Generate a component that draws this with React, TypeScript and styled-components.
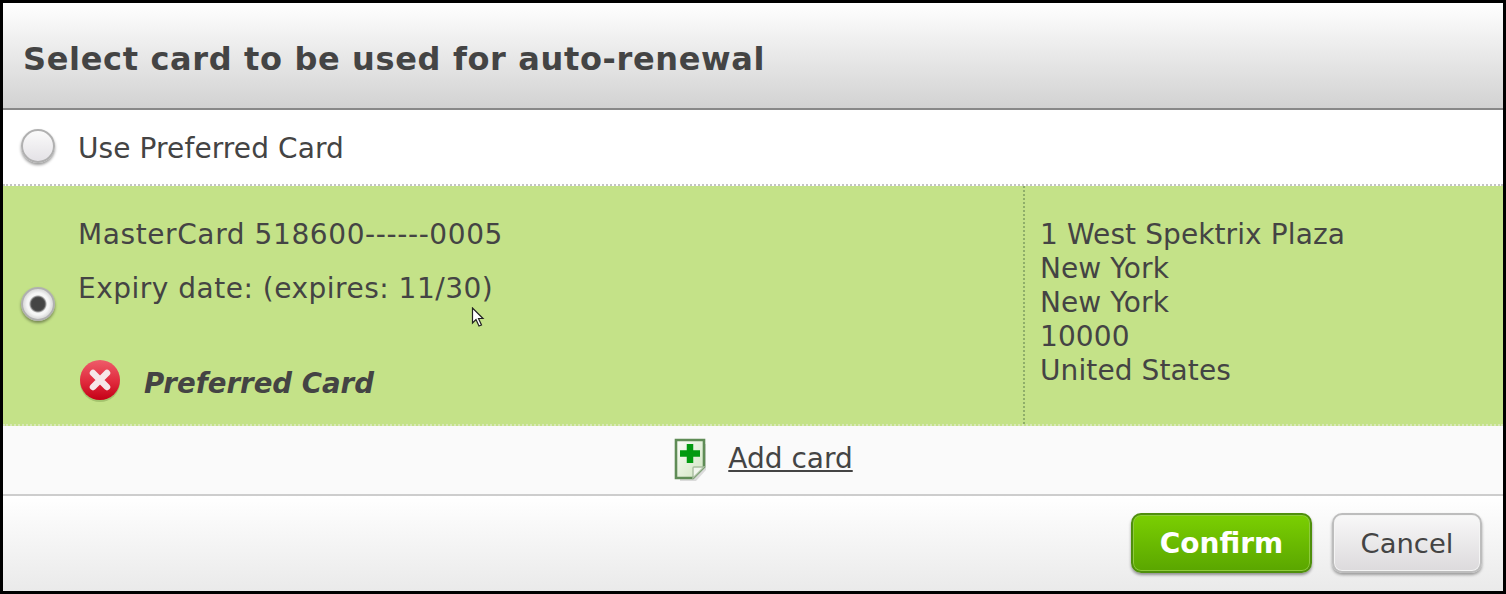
import styled, { createGlobalStyle } from "styled-components";

const GlobalStyle = createGlobalStyle`
  html, body {
    margin: 0;
    padding: 0;
    background: #000;
  }
  body {
    font-family: "DejaVu Sans", Verdana, sans-serif;
    color: #444;
  }
`;

const Dialog = styled.div`
  position: relative;
  box-sizing: border-box;
  width: 1506px;
  height: 594px;
  border: 3px solid #000;
  background: #fff;
  display: flex;
  flex-direction: column;
`;

const Header = styled.div`
  box-sizing: border-box;
  height: 107px;
  display: flex;
  align-items: center;
  padding: 6px 0 0 20px;
  background: linear-gradient(#fff, #d2d2d2);
  border-bottom: 2px solid #888;
`;

const Title = styled.h1`
  margin: 0;
  font-size: 32px;
  font-weight: 700;
  letter-spacing: 0.65px;
  color: #444;
`;

const PreferredRow = styled.label`
  box-sizing: border-box;
  height: 76px;
  display: flex;
  align-items: center;
  padding-top: 4px;
  border-bottom: 2px dotted #c4c4c4;
`;

const RadioCell = styled.div<{ $lift: number }>`
  width: 75px;
  flex: none;
  display: flex;
  justify-content: center;
  padding: 0 5px ${(p) => p.$lift}px 0;
  box-sizing: border-box;
`;

const Radio = styled.span<{ $checked?: boolean }>`
  display: block;
  width: 34px;
  height: 34px;
  border-radius: 50%;
  box-sizing: border-box;
  border: 2px solid #b0b0b0;
  background: ${(p) =>
    p.$checked
      ? "radial-gradient(circle, #444 0 6px, #555 7px, #f6f6f6 9px 11px, #d8d8d8 15px)"
      : "linear-gradient(#fafafa, #e4e2e6)"};
  box-shadow: 0 2px 3px rgba(0, 0, 0, 0.4);
`;

const BodyText = styled.span<{ $tracking?: number }>`
  font-size: 28px;
  line-height: 34px;
  letter-spacing: ${(p) => p.$tracking ?? 0.1}px;
  color: #444;
`;

const CardRow = styled.div`
  box-sizing: border-box;
  height: 240px;
  display: flex;
  background: #c4e288;
  border-bottom: 2px dotted #d8e8b8;
`;

const CardMain = styled.div`
  box-sizing: border-box;
  width: 1022px;
  flex: none;
  display: flex;
  align-items: center;
  border-right: 2px dotted #8fae6a;
`;

const CardDetails = styled.div`
  display: flex;
  flex-direction: column;
  padding-top: 32px;
  align-self: flex-start;
`;

const ExpiryLine = styled(BodyText)`
  margin-top: 20px;
`;

const PreferredBadge = styled.div`
  display: flex;
  align-items: center;
  gap: 22px;
  margin-top: 52px;
`;

const PreferredLabel = styled.span`
  padding-top: 6px;
  font-size: 27.6px;
  font-weight: 700;
  font-style: italic;
  color: #444;
`;

const Address = styled.div`
  display: flex;
  flex-direction: column;
  padding: 32px 0 0 15px;
`;

const AddRow = styled.div`
  box-sizing: border-box;
  height: 70px;
  display: flex;
  align-items: center;
  justify-content: center;
  gap: 21px;
  background: #fafafa;
  border-bottom: 2px solid #cdcdcd;
  padding: 0 0 3px 20px;
`;

const AddIcon = styled.svg`
  margin-top: 3px;
`;

const AddLink = styled.a`
  font-size: 28px;
  color: #444;
  text-decoration: underline;
`;

const Footer = styled.div`
  flex: 1;
  display: flex;
  align-items: center;
  justify-content: flex-end;
  gap: 20px;
  padding: 0 21px 2px 0;
  background: linear-gradient(#fff, #eaeaea);
`;

const Button = styled.button`
  box-sizing: border-box;
  height: 60px;
  padding: 2px 0 0;
  border-radius: 10px;
  font-family: inherit;
  cursor: pointer;
`;

const ConfirmButton = styled(Button)`
  width: 181px;
  font-size: 28px;
  font-weight: 700;
  color: #fff;
  border: 2px solid #4f8f0c;
  background: linear-gradient(#7bcf02, #5aa600);
  box-shadow: inset 0 0 0 1px #8ecb3c, 0 2px 3px rgba(0, 0, 0, 0.4);
`;

const CancelButton = styled(Button)`
  width: 150px;
  font-size: 27.4px;
  color: #444;
  border: 2px solid #bdbdbd;
  background: linear-gradient(#f8f8f8, #dcdadc);
  box-shadow: inset 0 0 0 1px #f4f4f4, 0 2px 3px rgba(0, 0, 0, 0.35);
`;

const Cursor = styled.svg`
  position: absolute;
  left: 468px;
  top: 304px;
`;

function RemoveIcon() {
  return (
    <svg width="44" height="44" viewBox="0 0 44 44">
      <defs>
        <linearGradient id="removeFill" x1="0" y1="0" x2="0" y2="1">
          <stop offset="0" stopColor="#ee5c6a" />
          <stop offset="0.55" stopColor="#e02a3c" />
          <stop offset="1" stopColor="#c40016" />
        </linearGradient>
      </defs>
      <ellipse cx="22" cy="24" rx="20" ry="20" fill="#7fa050" opacity="0.45" />
      <circle cx="22" cy="22" r="20" fill="url(#removeFill)" />
      <path
        d="M15 15 L29 29 M29 15 L15 29"
        stroke="#f6e8e8"
        strokeWidth="6.5"
        strokeLinecap="round"
      />
    </svg>
  );
}

function AddCardIcon() {
  return (
    <AddIcon width="34" height="44" viewBox="0 0 34 44">
      <defs>
        <linearGradient id="pageFill" x1="0" y1="0" x2="1" y2="1">
          <stop offset="0" stopColor="#fbfdf8" />
          <stop offset="1" stopColor="#cfe4c0" />
        </linearGradient>
      </defs>
      <path d="M7 6 H33 V32 L23 43 H7 Z" fill="#000" opacity="0.12" />
      <path d="M3 2 H31 V29 L20 40 H3 Z" fill="url(#pageFill)" stroke="#5f8c56" strokeWidth="2.6" />
      <path d="M20 40 V30 Q20 29 21 29 H31 Z" fill="#f2f6ee" stroke="#a9bea0" strokeWidth="1.4" />
      <path d="M17 6 V25 M7 15.500 H27" stroke="#029a10" strokeWidth="6.5" />
    </AddIcon>
  );
}

export default function App() {
  return (
    <>
      <GlobalStyle />
      <Dialog>
        <Header>
          <Title>Select card to be used for auto-renewal</Title>
        </Header>
        <PreferredRow>
          <RadioCell $lift={6}>
            <Radio />
          </RadioCell>
          <BodyText>Use Preferred Card</BodyText>
        </PreferredRow>
        <CardRow>
          <CardMain>
            <RadioCell $lift={2}>
              <Radio $checked />
            </RadioCell>
            <CardDetails>
              <BodyText $tracking={0.6}>MasterCard 518600------0005</BodyText>
              <ExpiryLine $tracking={0.5}>Expiry date: (expires: 11/30)</ExpiryLine>
              <PreferredBadge>
                <RemoveIcon />
                <PreferredLabel>Preferred Card</PreferredLabel>
              </PreferredBadge>
            </CardDetails>
          </CardMain>
          <Address>
            <BodyText>1 West Spektrix Plaza</BodyText>
            <BodyText>New York</BodyText>
            <BodyText>New York</BodyText>
            <BodyText>10000</BodyText>
            <BodyText>United States</BodyText>
          </Address>
        </CardRow>
        <AddRow>
          <AddCardIcon />
          <AddLink>Add card</AddLink>
        </AddRow>
        <Footer>
          <ConfirmButton>Confirm</ConfirmButton>
          <CancelButton>Cancel</CancelButton>
        </Footer>
        <Cursor width="14" height="22" viewBox="0 0 14 22">
          <path d="M1.500 1 V16 L5 12.500 L8 19 L10.500 18 L7.500 11.500 H12 Z" fill="#fff" stroke="#222" strokeWidth="1.2" />
        </Cursor>
      </Dialog>
    </>
  );
}
